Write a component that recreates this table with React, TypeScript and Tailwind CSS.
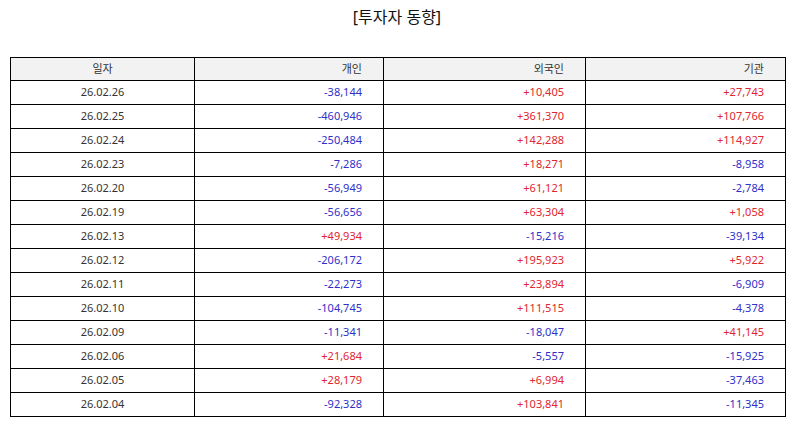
import React from "react";

const rows: [string, string, string, string][] = [
  ["26.02.26", "-38,144", "+10,405", "+27,743"],
  ["26.02.25", "-460,946", "+361,370", "+107,766"],
  ["26.02.24", "-250,484", "+142,288", "+114,927"],
  ["26.02.23", "-7,286", "+18,271", "-8,958"],
  ["26.02.20", "-56,949", "+61,121", "-2,784"],
  ["26.02.19", "-56,656", "+63,304", "+1,058"],
  ["26.02.13", "+49,934", "-15,216", "-39,134"],
  ["26.02.12", "-206,172", "+195,923", "+5,922"],
  ["26.02.11", "-22,273", "+23,894", "-6,909"],
  ["26.02.10", "-104,745", "+111,515", "-4,378"],
  ["26.02.09", "-11,341", "-18,047", "+41,145"],
  ["26.02.06", "+21,684", "-5,557", "-15,925"],
  ["26.02.05", "+28,179", "+6,994", "-37,463"],
  ["26.02.04", "-92,328", "+103,841", "-11,345"],
];

function Num({ v }: { v: string }) {
  const cls = v.startsWith("+") ? "text-[#e0262e]" : "text-[#3030c8]";
  return (
    <td className={`border border-black text-right pr-[21px] ${cls}`}>{v}</td>
  );
}

export default function App() {
  return (
    <div
      className="w-[794px] h-[425px] bg-white overflow-hidden"
      style={{ fontFamily: '"Noto Sans", "Noto Sans CJK KR", sans-serif' }}
    >
      <div className="pt-[5px] h-[57px] text-center text-[16px] leading-[24px] text-[#111]">
        [투자자 동향]
      </div>
      <table className="ml-[10px] w-[775px] border-collapse table-fixed text-[11px] text-[#333]">
        <colgroup>
          <col className="w-[184px]" />
          <col className="w-[189px]" />
          <col className="w-[202px]" />
          <col className="w-[200px]" />
        </colgroup>
        <thead>
          <tr className="h-[23px] bg-[#f2f2f2]">
            <th className="border border-black font-normal text-center">일자</th>
            <th className="border border-black font-normal text-right pr-[21px]">개인</th>
            <th className="border border-black font-normal text-right pr-[21px]">외국인</th>
            <th className="border border-black font-normal text-right pr-[21px]">기관</th>
          </tr>
        </thead>
        <tbody>
          {rows.map((r) => (
            <tr key={r[0]} className="h-[24px]">
              <td className="border border-black text-center">{r[0]}</td>
              <Num v={r[1]} />
              <Num v={r[2]} />
              <Num v={r[3]} />
            </tr>
          ))}
        </tbody>
      </table>
    </div>
  );
}
